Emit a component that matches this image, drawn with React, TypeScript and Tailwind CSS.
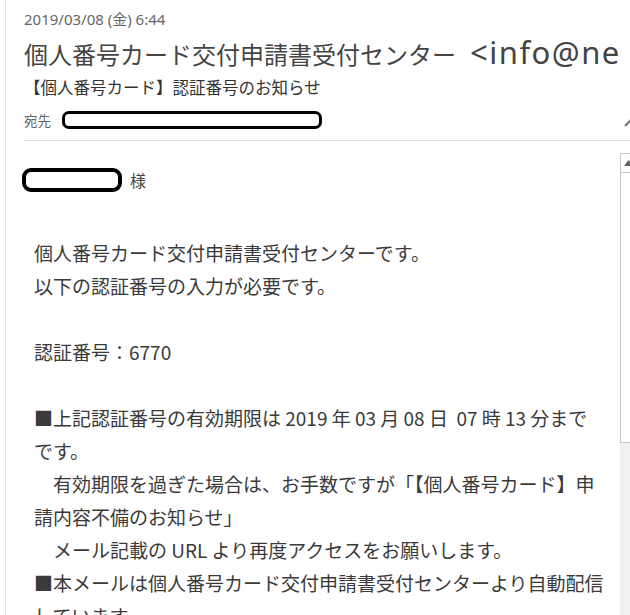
import React from "react";

const bodyLines: string[] = [
  "個人番号カード交付申請書受付センターです。",
  "以下の認証番号の入力が必要です。",
  "",
  "認証番号：6770",
  "",
  "■上記認証番号の有効期限は 2019 年 03 月 08 日  07 時 13 分まで",
  "です。",
  "\u3000有効期限を過ぎた場合は、お手数ですが「【個人番号カード】申",
  "請内容不備のお知らせ」",
  "\u3000メール記載の URL より再度アクセスをお願いします。",
  "■本メールは個人番号カード交付申請書受付センターより自動配信",
  "しています。",
];

export default function App() {
  return (
    <div className="w-[630px] h-[615px] overflow-hidden bg-white font-['Noto_Sans','Noto_Sans_CJK_JP',sans-serif]">
      <div className="ml-[5px] h-full border-l border-[#e2e2e2] flex flex-col">
        {/* header */}
        <div className="pl-[18px] pt-[8px]">
          <div className="h-[22px] leading-[22px] text-[15px] text-[#666] whitespace-nowrap">
            2019/03/08 (金) 6:44
          </div>
          <div className="h-[44px] leading-[44px] text-[24px] text-[#444] whitespace-nowrap font-['Noto_Sans_CJK_JP','Noto_Sans',sans-serif]">
            個人番号カード交付申請書受付センター
            <span className="ml-[14px] text-[31px] tracking-[1.5px] font-['Noto_Sans',sans-serif]">&lt;info@ne</span>
          </div>
          <div className="h-[26px] leading-[26px] text-[16.5px] text-[#333] whitespace-nowrap font-['Noto_Sans_CJK_JP',sans-serif]">
            【個人番号カード】認証番号のお知らせ
          </div>
          <div className="h-[40px] flex items-center">
            <span className="text-[13.5px] text-[#666] font-['Noto_Sans_CJK_JP',sans-serif]">宛先</span>
            <span className="ml-[11px] w-[260px] h-[18px] border-[3px] border-black rounded-[7px]" />
            <span className="ml-auto mr-[-4px] mt-[4px]">
              <svg width="10" height="10" viewBox="0 0 10 10">
                <line x1="1" y1="9" x2="9" y2="1" stroke="#777" strokeWidth="2" />
              </svg>
            </span>
          </div>
        </div>
        <div className="ml-[17px] border-t border-[#e1e1e1]" />
        {/* body */}
        <div className="flex flex-1 min-h-0">
          <div className="flex-1 pl-[16px] pt-[27px] font-['Noto_Sans_CJK_JP',sans-serif]">
            <div className="flex items-center h-[24px]">
              <span className="w-[100px] h-[24px] border-4 border-black rounded-[9px]" />
              <span className="ml-[8px] text-[16px] text-[#444]">様</span>
            </div>
            <div className="mt-[44px] pl-[12px] text-[19px] leading-[33px] text-[#3a3a3a]">
              {bodyLines.map((l, i) => (
                <div key={i} className="h-[33px] whitespace-pre">
                  {l}
                </div>
              ))}
            </div>
          </div>
          <div className="w-[17px] mr-[-7px] mt-[12px] flex flex-col bg-[#f0f0f0]">
            <div className="h-[20px] border border-[#c6c6c6] bg-white flex items-center justify-center">
              <svg width="9" height="6" viewBox="0 0 9 6">
                <polygon points="0,6 4.5,0 9,6" fill="#606060" />
              </svg>
            </div>
            <div className="h-[270px] border-x border-b border-[#c6c6c6] bg-white" />
          </div>
        </div>
      </div>
    </div>
  );
}
